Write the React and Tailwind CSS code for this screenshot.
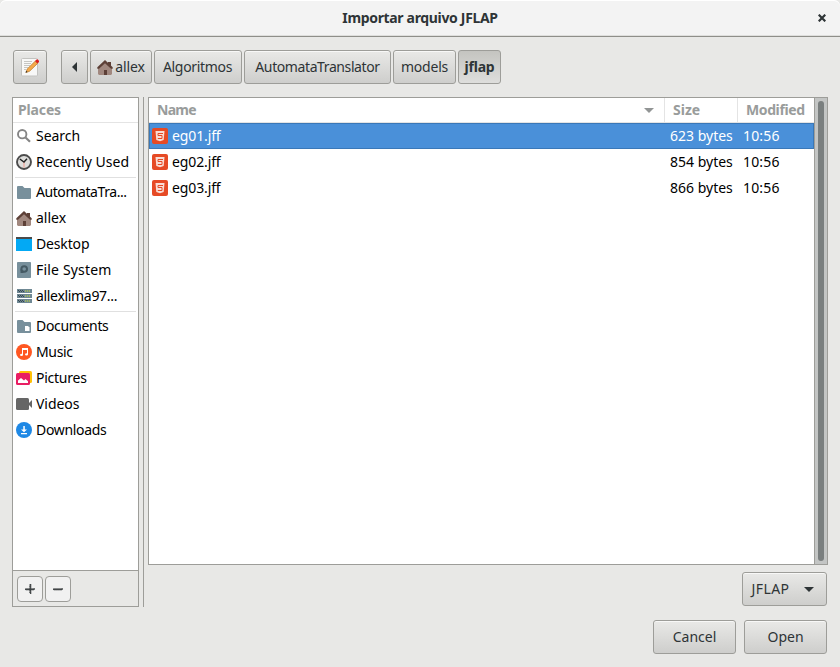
import React from "react";

const HomeIcon = () => (
  <svg width="16" height="16" viewBox="0 0 16 16" className="shrink-0">
    <path d="M11 3h3v4h-3z" fill="#5d4037" />
    <path d="M2 7.500 8 2l6 5.500V16H2z" fill="#a1887f" />
    <path d="M1 9h14v6.500H1z" fill="#a1887f" />
    <path d="M8 1 0.300 8.200v1.600L2 9.800 8 4.300l6 5.500h1.700V8.200z" fill="#5d4037" />
    <path d="M7 11h3v5H7z" fill="#5d4037" />
  </svg>
);

const SearchIcon = () => (
  <svg width="16" height="16" viewBox="0 0 16 16" fill="none" stroke="#858585" className="shrink-0">
    <circle cx="6.200" cy="6.200" r="4.200" strokeWidth="1.900" />
    <path d="m9.500 9.500 4.500 4.200" strokeWidth="2.200" />
  </svg>
);

const ClockIcon = () => (
  <svg width="16" height="16" viewBox="0 0 16 16" fill="none" className="shrink-0">
    <circle cx="8" cy="8" r="7" fill="#dededc" stroke="#4c4c4c" strokeWidth="1.900" />
    <path d="M8 8v5.500" stroke="#f0a59a" strokeWidth="1.200" />
    <path d="m3.800 5 4.200 3 3-3.200" stroke="#222" strokeWidth="1.400" />
  </svg>
);

const FolderIcon = ({ page }) => (
  <svg width="16" height="16" viewBox="0 0 16 16" className="shrink-0">
    <path d="M1 3q0-1 1-1h4.500l2 2H14q1 0 1 1v9q0 1-1 1H2q-1 0-1-1z" fill="#78909c" />
    {page && <path d="M9 8h3l1.500 1.500V13H9z" fill="#fff" />}
  </svg>
);

const DesktopIcon = () => (
  <svg width="16" height="16" viewBox="0 0 16 16" className="shrink-0">
    <path d="M0 1h16v14H0z" fill="#03a9f4" />
    <path d="M0 1h16v2H0z" fill="#4b4b4b" />
  </svg>
);

const DiskIcon = () => (
  <svg width="16" height="16" viewBox="0 0 16 16" className="shrink-0">
    <rect x="1" width="14" height="16" rx="0.800" fill="#78909c" />
    <circle cx="8.200" cy="7" r="2.800" fill="none" stroke="#455a64" strokeWidth="2" />
    <path d="M4.500 7v4H8z" fill="#455a64" />
  </svg>
);

const ServerIcon = () => (
  <svg width="16" height="16" viewBox="0 0 16 16" className="shrink-0">
    {[1, 6, 11].map((y) => (
      <g key={y}>
        <rect x="1" y={y} width="15" height="4" fill="#6f8894" />
        <path d={`M2 ${y + 1.500}h6M3 ${y + 2.500}h6`} stroke="#37474f" strokeDasharray="1 1" />
        <path d={`M9 ${y + 2}h5`} stroke="#c6dc39" strokeDasharray="1.200 0.800" />
      </g>
    ))}
  </svg>
);

const MusicIcon = () => (
  <svg width="16" height="16" viewBox="0 0 16 16" className="shrink-0">
    <circle cx="8" cy="8" r="8" fill="#ff5722" />
    <path d="M6 4h6v6.500q0 1-1.500 1T9 10.500q0-1.200 2-1.200V6H7v5q0 1-1.500 1T4 11q0-1.200 2-1.200z" fill="#fff" />
  </svg>
);

const PicturesIcon = () => (
  <svg width="16" height="16" viewBox="0 0 16 16" className="shrink-0">
    <rect x="3" y="1" width="13" height="12" rx="1.500" fill="#ffc107" />
    <rect y="3" width="14" height="12" rx="1.500" fill="#e91e63" />
    <path d="M2 13v-2.500L5 8l3 2.500L9.500 9l2.500 2.300V13z" fill="#fff" />
  </svg>
);

const VideoIcon = () => (
  <svg width="16" height="16" viewBox="0 0 16 16" fill="#666" className="shrink-0">
    <rect y="2" width="13" height="12" rx="1.500" />
    <path d="m12 8 4-4v8z" />
  </svg>
);

const DownloadIcon = () => (
  <svg width="16" height="16" viewBox="0 0 16 16" className="shrink-0">
    <circle cx="8" cy="8" r="8" fill="#1e88e5" />
    <path d="M7.300 4h1.500v3.500H11L8 10.300 5 7.500h2.300zM5 11h6v1.200H5z" fill="#fff" />
  </svg>
);

const HtmlIcon = () => (
  <svg width="16" height="16" viewBox="0 0 16 16" className="shrink-0">
    <rect width="16" height="16" rx="2" fill="#e64a25" />
    <path d="M3.500 3h9l-.8 9L8 13.300 4.300 12z" fill="#f9ddd5" />
    <path d="M11 5.500H6v2h4v3H5.800" fill="none" stroke="#e64a25" />
  </svg>
);

const EditIcon = () => (
  <svg width="20" height="20" viewBox="0 0 20 20">
    <rect x="1.500" y="1.500" width="16" height="17.500" rx="1" fill="#f8f8f7" stroke="#c3c3c0" />
    <path d="M4 4.500h8M4 6.500h7M4 8.500h6M4 10.500h4M4 12.500h2" stroke="#c6c6c3" />
    <path d="m6 15.500 1.200-3.500 8-7.800 2.300 2.300-8 7.800z" fill="#f5a94a" stroke="#b8751f" strokeWidth="0.700" />
    <path d="m5.500 15.700.7-2 1.400 1.300z" fill="#333" />
    <path d="m15 4 1.300-1.300q1-.8 2 .2t.7 2L17.500 6.500z" fill="#dc2020" />
  </svg>
);

const PLACES = [
  [
    ["Search", SearchIcon, "tracking-[-0.05px]"],
    ["Recently Used", ClockIcon, "tracking-[0.02px]"],
  ],
  [
    ["AutomataTra...", FolderIcon, "tracking-[-0.43px]"],
    ["allex", HomeIcon, ""],
    ["Desktop", DesktopIcon, "tracking-[-0.15px]"],
    ["File System", DiskIcon, "tracking-[0.18px]"],
    ["allexlima97...", ServerIcon, "tracking-[-0.32px]"],
  ],
  [
    ["Documents", () => <FolderIcon page />, "tracking-[-0.33px]"],
    ["Music", MusicIcon, "tracking-[-0.35px]"],
    ["Pictures", PicturesIcon, "tracking-[-0.25px]"],
    ["Videos", VideoIcon, "tracking-[-0.05px]"],
    ["Downloads", DownloadIcon, "tracking-[-0.33px]"],
  ],
];

const FILES = [
  ["eg01.jff", "623 bytes", "10:56"],
  ["eg02.jff", "854 bytes", "10:56"],
  ["eg03.jff", "866 bytes", "10:56"],
];

function Button({ className = "", active, children }) {
  return (
    <button
      className={`flex h-[34px] shrink-0 items-center justify-center whitespace-nowrap rounded-[3px] border border-[#9d9d99] ${
        active
          ? "bg-linear-to-b from-[#c4c4c0] to-[#dededc] font-bold"
          : "bg-linear-to-b from-[#e9e9e7] to-[#cececc] shadow-[inset_0_1px_#f8f8f7]"
      } ${className}`}
    >
      {children}
    </button>
  );
}

export default function App() {
  return (
    <div className="flex h-[667px] w-[840px] flex-col overflow-hidden bg-[#e8e8e6] font-['Noto_Sans',sans-serif] text-[14px] leading-[20px] text-[#2e3436]">
      <header className="grid h-[37px] shrink-0 grid-cols-[40px_1fr_40px] items-center rounded-t-[6px] border-b border-[#8e8e89] bg-[#f3f3f3] shadow-[inset_0_1px_#fff,inset_0_-1px_#dededc]">
        <h1 className="col-start-2 text-center font-bold tracking-[-0.33px]">Importar arquivo JFLAP</h1>
        <svg width="8" height="8" viewBox="0 0 8 8" className="ml-[18px]" stroke="#2e3436" strokeWidth="2.200">
          <path d="m.7.700 6.600 6.600M7.300.700.7 7.300" />
        </svg>
      </header>

      <nav className="mt-[13px] ml-[13px] flex h-[34px] shrink-0 gap-[2px]">
        <Button className="mr-3 w-[34px]"><EditIcon /></Button>
        <Button className="w-[27px]">
          <svg width="5" height="10" viewBox="0 0 5 10" fill="#2e3436"><path d="M5 0v10L0 5z" /></svg>
        </Button>
        <Button className="w-[62px]"><HomeIcon /><span className="ml-[2px] tracking-[-0.1px]">allex</span></Button>
        <Button className="w-[88px] pr-px tracking-[-0.33px]">Algoritmos</Button>
        <Button className="w-[147px] tracking-[-0.4px]">AutomataTranslator</Button>
        <Button className="w-[63px] tracking-[-0.2px]">models</Button>
        <Button className="w-[43px] tracking-[-0.2px]" active>jflap</Button>
      </nav>

      <main className="mt-[13px] ml-3 flex h-[510px] shrink-0">
        <aside className="flex w-[127px] flex-col border border-[#9d9d99]">
          <div className="flex-1 bg-white text-black">
            <div className="h-[25px] border-b border-[#e4e4e4] pt-[2px] pl-[5px] font-bold tracking-[-0.15px] text-[#999c9b]">Places</div>
            {PLACES.map((group, i) => (
              <React.Fragment key={i}>
                {i > 0 && <div className="mx-[2px] h-[4px] pt-[2px]"><div className="h-px bg-[#e0e0e0]" /></div>}
                {group.map(([label, Icon, style]) => (
                  <div key={label} className="flex h-[26px] items-center gap-1 pl-[3px] whitespace-nowrap">
                    <Icon />
                    <span className={style}>{label}</span>
                  </div>
                ))}
              </React.Fragment>
            ))}
          </div>
          <div className="flex h-[36px] gap-[2px] border-t border-[#9d9d99] pt-[5px] pl-1">
            <button className="flex size-[26px] items-center justify-center rounded-[4px] border border-[#9d9d99] bg-[#f1f1f1]">
              <svg width="10" height="10" viewBox="0 0 10 10" fill="none" stroke="#3c4042" strokeWidth="1.300"><path d="M0 5.800 1 4.800l1 1 1-1 1 1 1-1 1 1 1-1 1 1 1-1 1 .4M4.800 0l1 1-1 1 1 1-1 1 1 1-1 1 1 1-1 1 1 1-.4 1" /></svg>
            </button>
            <button className="flex size-[26px] items-center justify-center rounded-[4px] border border-[#9d9d99] bg-[#f1f1f1]">
              <svg width="10" height="10" viewBox="0 0 10 10" fill="none" stroke="#3c4042" strokeWidth="1.300"><path d="M0 5.800 1 4.800l1 1 1-1 1 1 1-1 1 1 1-1 1 1 1-1 1 .4" /></svg>
            </button>
          </div>
        </aside>
        <div className="ml-[4px] w-px bg-[#9d9d99]" />
        <section className="ml-[4px] flex h-[468px] w-[680px] border border-[#9d9d99] bg-white">
          <div className="flex-1 text-black">
            <div className="grid h-[25px] grid-cols-[516px_73px_1fr] border-b border-[#e4e4e4] font-bold text-[#999c9b]">
              <div className="flex items-center justify-between border-r border-[#e4e4e4] pr-[10px] pl-2">
                <span className="tracking-[-0.7px]">Name</span>
                <svg width="10" height="5" viewBox="0 0 10 5" fill="#929595"><path d="M0 0h10L5 5z" /></svg>
              </div>
              <div className="border-r border-[#e4e4e4] pt-[2px] pl-2">Size</div>
              <div className="pt-[2px] pl-2 tracking-[-0.4px]">Modified</div>
            </div>
            {FILES.map(([name, size, time], i) => (
              <div
                key={name}
                className={`grid h-[26px] grid-cols-[521px_73px_1fr] items-center ${
                  i === 0 ? "bg-[#4a90d9] text-white shadow-[inset_0_0_0_1px_#3a78b8]" : ""
                }`}
              >
                <div className="flex items-center gap-1 pl-[3px] tracking-[-0.12px]"><HtmlIcon />{name}</div>
                <div>{size}</div>
                <div className="tracking-[0.15px]">{time}</div>
              </div>
            ))}
          </div>
          <div className="w-[13px] border-l border-[#9d9d99] bg-[#c3c5c4] p-[3px]">
            <div className="h-full w-[6px] rounded-full bg-[#7a7f7f]" />
          </div>
        </section>
      </main>

      <footer className="-mt-[35px] mr-[13px] flex flex-col items-end gap-[14px]">
        <Button className="w-[85px] gap-[15px] pr-[3px]">
          <span className="tracking-[0.4px]">JFLAP</span>
          <svg width="10" height="5" viewBox="0 0 10 5" fill="#2e3436"><path d="M0 0h10L5 5z" /></svg>
        </Button>
        <div className="flex gap-2">
          <Button className="w-[83px]">Cancel</Button>
          <Button className="w-[83px]">Open</Button>
        </div>
      </footer>
    </div>
  );
}
